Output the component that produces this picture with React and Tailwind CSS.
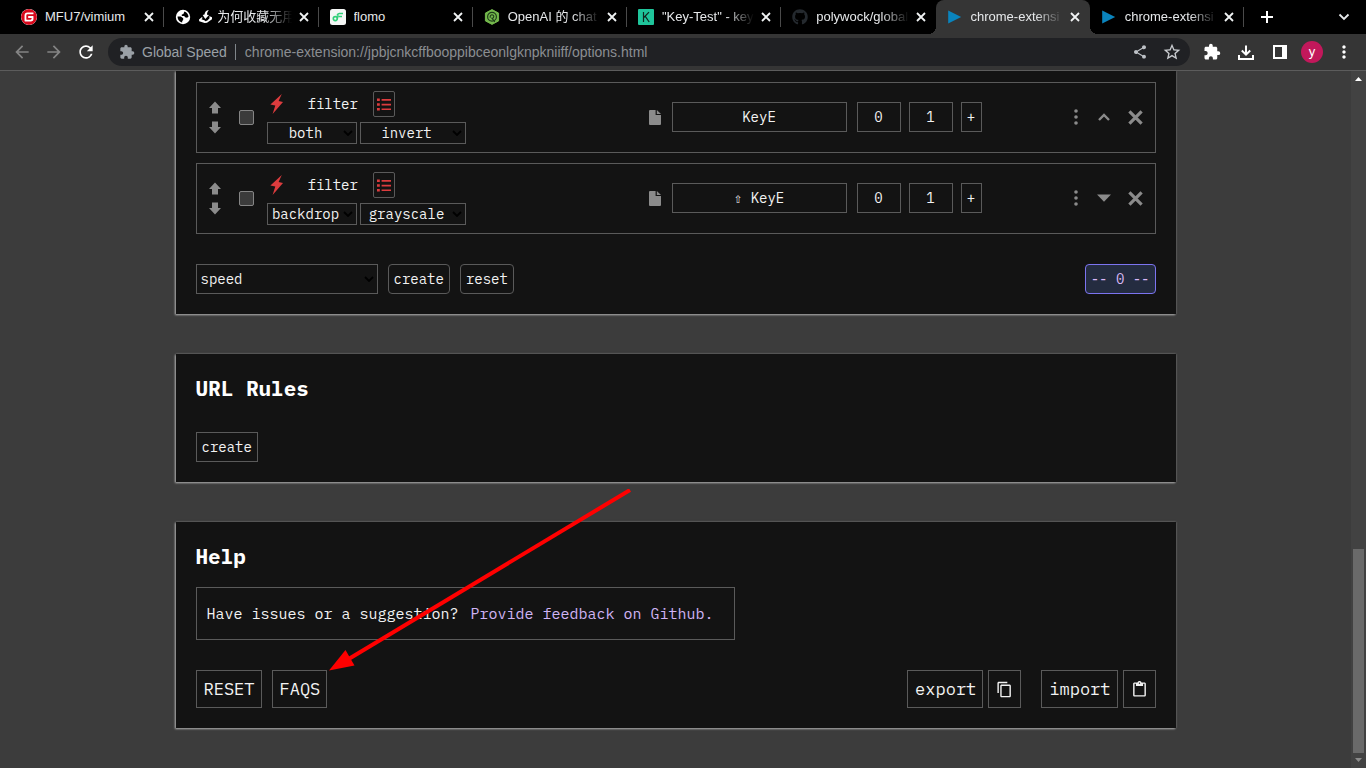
import { FaGithub } from 'react-icons/fa'
import {
  MdArrowBack,
  MdArrowForward,
  MdContentCopy,
  MdContentPaste,
  MdExtension,
  MdMoreVert,
  MdRefresh,
  MdShare,
  MdStarBorder,
} from 'react-icons/md'
import { SiGitee } from 'react-icons/si'

/* ── Favicons ── */

function GlobeIcon() {
  return (
    <svg viewBox="0 0 16 16" className="size-4">
      <circle cx="8" cy="8" r="7.2" fill="#fff" />
      <path d="M2.6 7.6h3.2l2.4 1.6v1.9l-1 .8v1.7C4.700 13.200 2.500 10.900 2.600 7.600z" fill="#000" />
      <path d="M9.400 2.600c2.300.6 4 2.700 4.100 5.200l-1.500.9-2-.4-.7-1.300H6.800V5.600l1.600-.5z" fill="#000" />
    </svg>
  )
}

function FlomoIcon() {
  return (
    <svg viewBox="0 0 16 16" className="size-4">
      <rect width="16" height="16" rx="2.5" fill="#f4f6f5" />
      <path d="M13 4.500H9.200c-1.300 0-1.700.8-2.100 2.100M12 7.500H8.400" fill="none" stroke="#30cf79" strokeWidth="1.7" />
      <circle cx="5.3" cy="9.6" r="2" fill="none" stroke="#30cf79" strokeWidth="1.6" />
      <path d="M7.200 9.800l1-3.400" stroke="#30cf79" strokeWidth="1.5" />
    </svg>
  )
}

function ForumIcon() {
  return (
    <svg viewBox="0 0 16 16" className="size-4">
      <path d="M8 0.600l6.600 3.500v7.800L8 15.400l-6.600-3.500V4.100z" fill="#74b84c" stroke="#74b84c" strokeLinejoin="round" />
      <circle cx="8" cy="7.8" r="4.4" fill="none" stroke="#1f3d1a" strokeWidth="1.2" />
      <path d="M6.200 8.800V7.600a1.800 1.800 0 113.600 0c0 1.200-.8 1.800-1.800 1.800l2.800 3.400" fill="none" stroke="#1f3d1a" strokeWidth="1.1" />
    </svg>
  )
}

function KeyTestIcon() {
  return (
    <svg viewBox="0 0 16 16" className="size-4">
      <rect width="16" height="16" rx="1" fill="#1fc59b" />
      <path d="M5.500 3v10M11 3.200L5.800 8.500M7.300 7.300L11.200 13" fill="none" stroke="#10261f" strokeWidth="1.2" />
    </svg>
  )
}

function PlayIcon() {
  return (
    <svg viewBox="0 0 16 16" className="size-4">
      <path d="M1.200 1.600L14.200 8 1.200 14.600z" fill="#0a84bd" />
    </svg>
  )
}

function InboxIcon() {
  return (
    <svg viewBox="0 0 13 13" className="mr-[5px] inline-block size-[13px] align-[-2px]" fill="#fff">
      <path d="M0 9.500L3 7l.6 1L2.400 9.300l3 .9 1 1 2-.8 2.600-2.700-1-.4.600-1 2.600 1v1.900L8 12.800l-2.300.2L.2 11.300z" />
      <path d="M9.800 0C7 .4 5.700 2.200 5.500 4.600L3.700 5l2.600 4L10 5l-2-.2C8 3 8.600 1.500 9.800 0z" />
    </svg>
  )
}

/* ── Row icons ── */

function BlockArrow({ down }) {
  return (
    <svg viewBox="0 0 12 13" className={down ? 'h-[13px] w-3 rotate-180' : 'h-[13px] w-3'}>
      <path d="M6 0.500l6 6.500H9v5.500H3V7H0z" fill="#8b8b8b" />
    </svg>
  )
}

function Bolt() {
  return (
    <svg viewBox="0 0 13 20" className="h-5 w-[13px]">
      <path d="M11.800 0L.4 10.600l4.900.9L2.600 20 13 8 8.600 7z" fill="#dc3c3e" />
    </svg>
  )
}

function ListIcon() {
  return (
    <svg viewBox="0 0 14 13" className="h-[13px] w-3.5" fill="#dc3c3e">
      <path d="M0 0.500h2.800v2.600H0zM0 5.200h2.800v2.600H0zM0 9.900h2.800v2.600H0z" />
      <path d="M4.600 1h9.400v1.700H4.600zM4.600 5.700h9.400v1.700H4.600zM4.600 10.400h9.400v1.700H4.600z" />
    </svg>
  )
}

function FileIcon() {
  return (
    <svg viewBox="0 0 12 15" className="h-[15px] w-3">
      <path d="M1 0h5.600v5H12v9a1 1 0 01-1 1H1a1 1 0 01-1-1V1a1 1 0 011-1z" fill="#8b8b8b" />
      <path d="M7.800 0L12 4H7.800z" fill="#8b8b8b" />
    </svg>
  )
}

function DotsIcon() {
  return (
    <svg viewBox="0 0 4 16" className="h-4 w-1" fill="#8b8b8b">
      <circle cx="2" cy="2" r="1.8" />
      <circle cx="2" cy="8" r="1.8" />
      <circle cx="2" cy="14" r="1.8" />
    </svg>
  )
}

function CrossIcon() {
  return (
    <svg viewBox="0 0 15 15" className="size-[15px]">
      <path d="M1.400 1.400l12.200 12.200M13.600 1.400L1.400 13.600" stroke="#8b8b8b" strokeWidth="3.2" />
    </svg>
  )
}

function Toggle({ open }) {
  return (
    <svg viewBox="0 0 14 8" className="h-2 w-3.5">
      {open ? (
        <path d="M2 7l5-5 5 5" fill="none" stroke="#8b8b8b" strokeWidth="2.4" />
      ) : (
        <path d="M0 0.500h14L7 7.800z" fill="#8b8b8b" />
      )}
    </svg>
  )
}

/* ── Browser chrome ── */

const TABS = [
  { title: 'MFU7/vimium', icon: <SiGitee className="size-4 rounded-full bg-white text-[#d8081c]" />, divider: true },
  { title: '为何收藏无用', icon: <GlobeIcon />, inbox: true, fade: true, divider: true },
  { title: 'flomo', icon: <FlomoIcon />, divider: true },
  { title: 'OpenAI 的 chat', icon: <ForumIcon />, fade: true, divider: true },
  { title: '"Key-Test" - key', icon: <KeyTestIcon />, fade: true, divider: true },
  { title: 'polywock/global', icon: <FaGithub className="size-4 text-[#24292e]" />, fade: true },
  { title: 'chrome-extensi', icon: <PlayIcon />, fade: true, active: true },
  { title: 'chrome-extensi', icon: <PlayIcon />, fade: true, divider: true },
]

function Tab({ tab }) {
  return (
    <div
      className={
        'relative flex h-full min-w-0 flex-1 items-center pl-[11px] pr-[7px] ' +
        (tab.active ? 'rounded-t-lg bg-[#353535]' : '')
      }
    >
      {tab.active && (
        <>
          <span className="absolute bottom-0 -left-2 size-2 bg-[radial-gradient(circle_at_0_0,transparent_8px,#353535_8px)]" />
          <span className="absolute bottom-0 -right-2 size-2 bg-[radial-gradient(circle_at_100%_0,transparent_8px,#353535_8px)]" />
        </>
      )}
      <span className="flex shrink-0">{tab.icon}</span>
      <span
        className={
          'ml-2 mr-1 min-w-0 flex-1 overflow-hidden whitespace-nowrap text-[13px] leading-4 text-[#e6e8ea] ' +
          (tab.fade ? '[mask-image:linear-gradient(to_right,black_70%,transparent)]' : '')
        }
      >
        {tab.inbox && <InboxIcon />}
        {tab.title}
      </span>
      <button aria-label="Close tab" className="flex size-4 shrink-0 items-center justify-center">
        <svg viewBox="0 0 10 10" className="size-2.5">
          <path d="M1 1l8 8M9 1L1 9" stroke="#f1f3f4" strokeWidth="1.8" />
        </svg>
      </button>
      {tab.divider && <span className="absolute right-0 h-5 w-px bg-[#4a4a4a]" />}
    </div>
  )
}

function TabStrip() {
  return (
    <div className="flex h-[34px] shrink-0 bg-black pl-2.5">
      {TABS.map((tab, i) => (
        <Tab key={i} tab={tab} />
      ))}
      <div className="flex w-[122px] shrink-0 items-center justify-between px-4">
        <button aria-label="New tab">
          <svg viewBox="0 0 14 14" className="size-3.5">
            <path d="M7 1v12M1 7h12" stroke="#fff" strokeWidth="2" />
          </svg>
        </button>
        <button aria-label="Search tabs">
          <svg viewBox="0 0 12 8" className="h-2 w-3">
            <path d="M1.500 1.500L6 6l4.500-4.500" fill="none" stroke="#e8eaed" strokeWidth="1.8" />
          </svg>
        </button>
      </div>
    </div>
  )
}

function Toolbar() {
  return (
    <div className="flex h-[37px] shrink-0 items-center border-b border-[#5c5c5c] bg-[#353535] px-3">
      <div className="flex w-24 shrink-0 gap-3">
        <button aria-label="Back"><MdArrowBack className="size-5 text-[#848484]" /></button>
        <button aria-label="Forward"><MdArrowForward className="size-5 text-[#848484]" /></button>
        <button aria-label="Reload"><MdRefresh className="size-5 text-white" /></button>
      </div>
      <div className="flex h-7 min-w-0 flex-1 items-center rounded-full bg-[#202124] pl-[11px] pr-2 text-sm text-[#9aa0a6]">
        <MdExtension className="size-4 shrink-0" />
        <span className="ml-[7px] shrink-0">Global Speed</span>
        <span className="ml-2 mr-[9px] h-4 w-px shrink-0 bg-[#80868b]" />
        <input
          aria-label="Address"
          defaultValue="chrome-extension://jpbjcnkcffbooppibceonlgknpkniiff/options.html"
          className="min-w-0 flex-1 bg-transparent text-[#8b8e92] outline-none"
        />
        <button aria-label="Share"><MdShare className="size-4 text-[#bdc1c6]" /></button>
        <button aria-label="Bookmark" className="ml-3.5"><MdStarBorder className="size-5 text-[#c8cbcf]" /></button>
      </div>
      <div className="ml-[13px] flex shrink-0 items-center text-white">
        <button aria-label="Extensions"><MdExtension className="size-[18px]" /></button>
        <button aria-label="Downloads" className="ml-4 w-[18px]">
          <svg viewBox="0 0 18 18" className="size-[18px]" fill="none" stroke="#fff" strokeWidth="2">
            <path d="M9 2.500v9M4.800 7.500L9 11.700l4.200-4.200M2 12v4h14v-4" />
          </svg>
        </button>
        <button aria-label="Side panel" className="ml-[18px]">
          <svg viewBox="0 0 14 14" className="size-3.5">
            <path d="M0 0h14v14H0zM2 2v10h7V2z" fill="#fff" fillRule="evenodd" />
          </svg>
        </button>
        <button aria-label="Profile" className="ml-3.5 size-[22px] rounded-full bg-[#c2185b] text-[13px] leading-5">
          y
        </button>
        <button aria-label="Menu" className="ml-[11px]"><MdMoreVert className="size-5" /></button>
      </div>
    </div>
  )
}

/* ── Options page ── */

function Card({ className, children }) {
  return (
    <section className={'bg-[#131313] px-5 pb-5 shadow-[-1px_1px_2px_#aaa,0_0_2px_#777] ' + className}>
      {children}
    </section>
  )
}

function Select({ label, value, className, align, arrow }) {
  return (
    <span className={'relative flex items-center border border-[#5a5a5a] ' + className}>
      <select
        aria-label={label}
        defaultValue={value}
        className={'size-full appearance-none bg-transparent pl-1 pr-4 outline-none ' + align}
      >
        <option>{value}</option>
      </select>
      <svg viewBox="0 0 10 6" className={'pointer-events-none absolute h-1.5 w-2.5 ' + arrow}>
        <path d="M1 1l4 4 4-4" fill="none" stroke="#000" strokeWidth="1.8" />
      </svg>
    </span>
  )
}

function Shortcut({ target, filter, hotkey, shift, open }) {
  return (
    <div className="flex h-[71px] items-center border border-[#5a5a5a]">
      <div className="flex w-9 shrink-0 flex-col items-center gap-[7px] pb-px">
        <button aria-label="Move up"><BlockArrow /></button>
        <button aria-label="Move down"><BlockArrow down /></button>
      </div>
      <div className="flex w-[27px] shrink-0 justify-center">
        <input
          type="checkbox"
          aria-label="Enabled"
          className="size-[15px] appearance-none rounded-xs border border-[#858585] bg-[#3b3b3b]"
        />
      </div>

      {/* Command */}
      <div className="ml-[7px] flex flex-col gap-[5px]">
        <div className="flex h-[26px] items-center pl-[3px]">
          <Bolt />
          <span className="ml-[25px]">filter</span>
          <button
            aria-label="Filter list"
            className="ml-[15px] flex h-[26px] w-[22px] items-center justify-center rounded-xs border border-[#5a5a5a]"
          >
            <ListIcon />
          </button>
        </div>
        <div className="flex gap-[3px]">
          <Select label="Target" value={target} className="h-[22px] w-[90px]" align="text-center" arrow="right-[3px]" />
          <Select label="Filter" value={filter} className="h-[22px] w-[106px]" align="text-center" arrow="right-[3px]" />
        </div>
      </div>

      {/* Key binding and values */}
      <div className="ml-auto flex items-center pb-px">
        <button aria-label="Page shortcut"><FileIcon /></button>
        <button className="ml-[11px] h-[30px] w-[175px] border border-[#5a5a5a]">
          {shift && <span className="font-['DejaVu_Sans_Mono',monospace]">⇧ </span>}
          {hotkey}
        </button>
        <input aria-label="First value" defaultValue="0" className="ml-2.5 h-[30px] w-11 border border-[#5a5a5a] text-center" />
        <input aria-label="Second value" defaultValue="1" className="ml-2 h-[30px] w-11 border border-[#5a5a5a] text-center" />
        <button className="ml-2 h-[30px] w-[21px] border border-[#5a5a5a]">+</button>
      </div>

      <div className="flex w-[173px] shrink-0 items-center justify-end pr-[3px] pb-px">
        <button aria-label="More" className="flex w-[26px] justify-center"><DotsIcon /></button>
        <button aria-label="Toggle details" className="flex w-[30px] justify-center"><Toggle open={open} /></button>
        <button aria-label="Remove" className="flex w-[33px] justify-center"><CrossIcon /></button>
      </div>
    </div>
  )
}

function Shortcuts() {
  return (
    <Card className="pt-[11px]">
      <div className="flex flex-col gap-2.5">
        <Shortcut target="both" filter="invert" hotkey="KeyE" open />
        <Shortcut target="backdrop" filter="grayscale" hotkey="KeyE" shift />
      </div>
      <div className="mt-[30px] flex h-[30px] gap-2.5">
        <Select label="Command" value="speed" className="w-[182px]" align="text-left" arrow="right-[3px]" />
        <button className="rounded-sm border border-[#5a5a5a] px-[5px]">create</button>
        <button className="rounded-sm border border-[#5a5a5a] px-[5px]">reset</button>
        <button className="ml-auto rounded-sm border border-[#7c74f0] bg-[#242c40] px-[5px] text-[#d9b8f5]">
          -- 0 --
        </button>
      </div>
    </Card>
  )
}

function UrlRules() {
  return (
    <Card className="pt-5">
      <h2 className="text-[21px] leading-7 font-bold text-white">URL Rules</h2>
      <button className="mt-[30px] h-[30px] border border-[#5a5a5a] px-[5px]">create</button>
    </Card>
  )
}

function Help() {
  return (
    <Card className="pt-5">
      <h2 className="text-[21px] leading-7 font-bold text-white">Help</h2>
      <div className="mt-[17px] flex h-[53px] w-[539px] items-center gap-3 border border-[#5a5a5a] px-2.5 text-[15px]">
        <span>Have issues or a suggestion?</span>
        <a href="#feedback" className="text-[#d0b4f5]">Provide feedback on Github.</a>
      </div>
      <div className="mt-[30px] flex h-[38px] text-[17px]">
        <button className="border border-[#5a5a5a] pl-[7px] pr-1.5">RESET</button>
        <button className="ml-2.5 border border-[#5a5a5a] pl-[7px] pr-1.5">FAQS</button>
        <button className="ml-auto border border-[#5a5a5a] pl-[7px] pr-1.5">export</button>
        <button aria-label="Copy" className="ml-[5px] flex w-[33px] items-center justify-center border border-[#5a5a5a]">
          <MdContentCopy className="size-[17px]" />
        </button>
        <button className="ml-5 border border-[#5a5a5a] pl-[7px] pr-1.5">import</button>
        <button aria-label="Paste" className="ml-[5px] flex w-[33px] items-center justify-center border border-[#5a5a5a]">
          <MdContentPaste className="size-[17px]" />
        </button>
      </div>
    </Card>
  )
}

function Scrollbar() {
  return (
    <div className="flex w-[15px] shrink-0 flex-col items-center bg-[#424242]">
      <svg viewBox="0 0 7 4" className="mt-1.5 h-1 w-[7px]"><path d="M3.500 0L7 4H0z" fill="#fff" /></svg>
      <div className="mb-[5px] mt-auto h-[204px] w-[11px] bg-[#6a6a6a]" />
      <svg viewBox="0 0 7 4" className="mb-1.5 h-1 w-[7px]"><path d="M0 0h7L3.500 4z" fill="#8b8b8b" /></svg>
    </div>
  )
}

// Red pointer drawn over the page, aimed at the FAQS button
function Arrow() {
  return (
    <svg viewBox="0 0 302 182" className="pointer-events-none absolute left-[329px] top-[489px] h-[182px] w-[302px]">
      <path d="M18 171L301 1" stroke="#f00" strokeWidth="4" />
      <path d="M0 181.500L16.500 161l9 15.500z" fill="#f00" />
    </svg>
  )
}

export default function App() {
  return (
    <div className="relative flex h-screen flex-col overflow-hidden bg-[#3c3c3c] font-['Liberation_Sans','Noto_Sans_CJK_SC',sans-serif]">
      <TabStrip />
      <Toolbar />
      <div className="flex min-h-0 flex-1">
        <main className="min-w-0 flex-1 overflow-hidden font-['IBM_Plex_Mono','Liberation_Mono','DejaVu_Sans_Mono',monospace] text-sm text-[#f2f2f2]">
          <div className="mx-auto flex max-w-[1000px] flex-col gap-10">
            <Shortcuts />
            <UrlRules />
            <Help />
          </div>
        </main>
        <Scrollbar />
      </div>
      <Arrow />
    </div>
  )
}
